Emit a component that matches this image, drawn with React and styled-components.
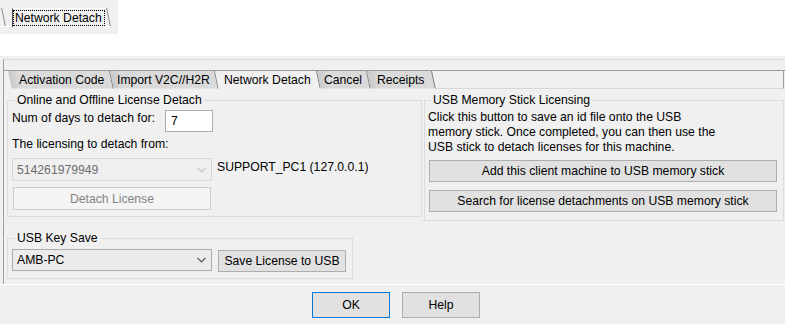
import React from "react";
import styled, { createGlobalStyle } from "styled-components";

const Global = createGlobalStyle`
  html, body { margin: 0; padding: 0; background: #ffffff; }
  body { font-family: "Liberation Sans", Arial, sans-serif; font-size: 12.2px; color: #000; }
  * { box-sizing: border-box; }
`;

const Page = styled.div`
  width: 785px;
  height: 324px;
  display: flex;
  flex-direction: column;
  overflow: hidden;
`;

const Snippet = styled.div`
  width: 118px;
  height: 34px;
  background: #f0f0f0;
  display: flex;
  align-items: flex-start;
  padding-top: 8px;
`;

const SnipStub = styled.div`
  position: relative;
  width: ${(p) => p.$w}px;
  height: 19px;
  border-bottom: 1px solid #ffffff;
  &::after {
    content: "";
    position: absolute;
    top: 0;
    bottom: 0;
    ${(p) => (p.$side === "left" ? "left: 3px;" : "left: 2px;")}
    width: 1px;
    background: #8a8a8a;
    transform: skewX(12deg);
  }
`;

const SnipTab = styled.div`
  height: 19px;
  border-left: 1px solid #4a4a4a;
  border-top: 1px solid #ffffff;
  padding: 1px 1px 1px 0;
  display: flex;
`;

const FocusText = styled.span`
  outline: 1px dotted #000;
  outline-offset: -1px;
  padding: 0 3px 0 2px;
  line-height: 16px;
  white-space: nowrap;
`;

const Gap = styled.div`
  height: 22px;
  flex: none;
`;

const Dialog = styled.div`
  flex: 1;
  background: #f0f0f0;
  display: flex;
  flex-direction: column;
`;

const Frame = styled.div`
  margin: 3px 0 0 3px;
  height: 225px;
  border-top: 1px solid #d9d9d9;
  border-left: 1px solid #a0a0a0;
  display: flex;
  flex-direction: column;
`;

const TopBand = styled.div`
  height: 11px;
  flex: none;
  border-bottom: 1px solid #9a9a9a;
`;

const TabRow = styled.div`
  height: 18px;
  flex: none;
  display: flex;
  padding-left: 4px;
`;

const Tab = styled.div`
  position: relative;
  isolation: isolate;
  width: ${(p) => p.$w}px;
  padding-left: ${(p) => p.$pl}px;
  line-height: 18px;
  white-space: nowrap;
  &::before {
    content: "";
    position: absolute;
    inset: 0;
    z-index: -1;
    background: ${(p) =>
      p.$active ? "#f0f0f0" : "linear-gradient(90deg, #c9c9c9 0, #dadada 10px, #dadada 100%)"};
    border-right: 1px solid #7d7d7d;
    border-bottom: 1px solid ${(p) => (p.$active ? "transparent" : "#e3e3e3")};
    transform: skewX(12deg);
    transform-origin: 0 0;
  }
`;

const TabFiller = styled.div`
  flex: 1;
  margin-left: 4px;
  margin-right: 1px;
  border-right: 1px solid #a0a0a0;
  border-bottom: 1px solid #dadada;
`;

const Panel = styled.div`
  flex: 1;
  padding: 4px 0 0 3px;
  display: flex;
  flex-direction: column;
`;

const GroupRow = styled.div`
  display: flex;
  align-items: flex-start;
  gap: 2px;
`;

const Group = styled.fieldset`
  margin: 0;
  width: ${(p) => p.$w}px;
  border: 1px solid #dcdcdc;
  padding: 0 ${(p) => p.$pr || 0}px ${(p) => p.$pb}px ${(p) => p.$pl}px;
  min-width: 0;
`;

const Legend = styled.legend`
  padding: 0 2px;
  margin-left: ${(p) => p.$ml}px;
  line-height: 14px;
  white-space: nowrap;
`;

const FieldRow = styled.div`
  display: flex;
  align-items: flex-start;
  margin-top: ${(p) => p.$mt}px;
`;

const Label = styled.span`
  line-height: 16px;
  white-space: nowrap;
  width: ${(p) => (p.$w ? `${p.$w}px` : "auto")};
  flex: none;
`;

const Line = styled.div`
  line-height: 14px;
  margin-top: ${(p) => p.$mt || 0}px;
  white-space: nowrap;
`;

const TextInput = styled.input`
  width: 48px;
  height: 22px;
  margin: 0;
  padding: 0 0 0 5px;
  border: 1px solid #abadb3;
  background: #fff;
  font: inherit;
  color: #000;
  outline: none;
`;

const Combo = styled.div`
  width: 200px;
  height: ${(p) => p.$h}px;
  flex: none;
  display: flex;
  align-items: center;
  justify-content: space-between;
  padding: 0 5px 0 4px;
  border: 1px solid ${(p) => (p.$disabled ? "#d6d6d6" : "#acacac")};
  background: ${(p) => (p.$disabled ? "#efefef" : "#ebebeb")};
  color: ${(p) => (p.$disabled ? "#6d6d6d" : "#000")};
`;

const Chevron = ({ color }) => (
  <svg width="9" height="6" viewBox="0 0 9 6">
    <path d="M0.5 0.8 L4.5 4.8 L8.5 0.8" fill="none" stroke={color} strokeWidth="1.2" />
  </svg>
);

const Button = styled.button`
  width: ${(p) => p.$w}px;
  height: ${(p) => p.$h}px;
  margin: ${(p) => p.$m || "0"};
  padding: 0;
  flex: none;
  font: inherit;
  color: ${(p) => (p.disabled ? "#838383" : "#000")};
  background: ${(p) => (p.disabled ? "#f4f4f4" : "#e1e1e1")};
  border: 1px solid ${(p) => (p.$primary ? "#0078d7" : p.disabled ? "#cccccc" : "#adadad")};
  white-space: nowrap;
  cursor: default;
`;

const SideText = styled.span`
  margin: 1px 0 0 5px;
  line-height: 16px;
  white-space: nowrap;
`;

const Footer = styled.div`
  flex: 1;
  border-top: 1px solid #ffffff;
  display: flex;
  justify-content: center;
  align-items: flex-start;
  gap: 12px;
  padding: 7px 0 0 7px;
`;

const tabs = [
  { label: "Activation Code", w: 102, pl: 11 },
  { label: "Import V2C//H2R", w: 105, pl: 7 },
  { label: "Network Detach", w: 102, pl: 9, active: true },
  { label: "Cancel", w: 50, pl: 7 },
  { label: "Receipts", w: 65, pl: 10 },
];

export default function App() {
  return (
    <>
      <Global />
      <Page>
        <Snippet>
          <SnipStub $w={12} $side="left" />
          <SnipTab>
            <FocusText>Network Detach</FocusText>
          </SnipTab>
          <SnipStub $w={8} $side="right" />
        </Snippet>
        <Gap />
        <Dialog>
          <Frame>
            <TopBand />
            <TabRow>
              {tabs.map((t) => (
                <Tab key={t.label} $w={t.w} $pl={t.pl} $active={t.active}>
                  {t.label}
                </Tab>
              ))}
              <TabFiller />
            </TabRow>
            <Panel>
              <GroupRow>
                <Group $w={415} $pl={4} $pb={6}>
                  <Legend $ml={3}>Online and Offline License Detach</Legend>
                  <FieldRow $mt={3}>
                    <Label $w={153}>Num of days to detach for:</Label>
                    <TextInput defaultValue="7" />
                  </FieldRow>
                  <FieldRow $mt={4}>
                    <Label>The licensing to detach from:</Label>
                  </FieldRow>
                  <FieldRow $mt={6}>
                    <Combo $disabled $h={23}>
                      <span>514261979949</span>
                      <Chevron color="#c4c4c4" />
                    </Combo>
                    <SideText>SUPPORT_PC1 (127.0.0.1)</SideText>
                  </FieldRow>
                  <FieldRow $mt={6}>
                    <Button disabled $w={198} $h={23} $m="0 0 0 1px">
                      Detach License
                    </Button>
                  </FieldRow>
                </Group>
                <Group $w={360} $pl={3} $pb={8}>
                  <Legend $ml={3}>USB Memory Stick Licensing</Legend>
                  <Line $mt={3}>Click this button to save an id file onto the USB</Line>
                  <Line $mt={1}>memory stick. Once completed, you can then use the</Line>
                  <Line $mt={1}>USB stick to detach licenses for this machine.</Line>
                  <FieldRow $mt={6}>
                    <Button $w={348} $h={22} $m="0 0 0 1px">
                      Add this client machine to USB memory stick
                    </Button>
                  </FieldRow>
                  <FieldRow $mt={8}>
                    <Button $w={348} $h={22} $m="0 0 0 1px">
                      Search for license detachments on USB memory stick
                    </Button>
                  </FieldRow>
                </Group>
              </GroupRow>
              <FieldRow $mt={10}>
                <Group $w={346} $pl={4} $pb={6}>
                  <Legend $ml={3}>USB Key Save</Legend>
                  <FieldRow $mt={4}>
                    <Combo $h={22}>
                      <span>AMB-PC</span>
                      <Chevron color="#555555" />
                    </Combo>
                    <Button $w={128} $h={22} $m="1px 0 0 6px">
                      Save License to USB
                    </Button>
                  </FieldRow>
                </Group>
              </FieldRow>
            </Panel>
          </Frame>
          <Footer>
            <Button $primary $w={78} $h={26}>
              OK
            </Button>
            <Button $w={78} $h={26}>
              Help
            </Button>
          </Footer>
        </Dialog>
      </Page>
    </>
  );
}
